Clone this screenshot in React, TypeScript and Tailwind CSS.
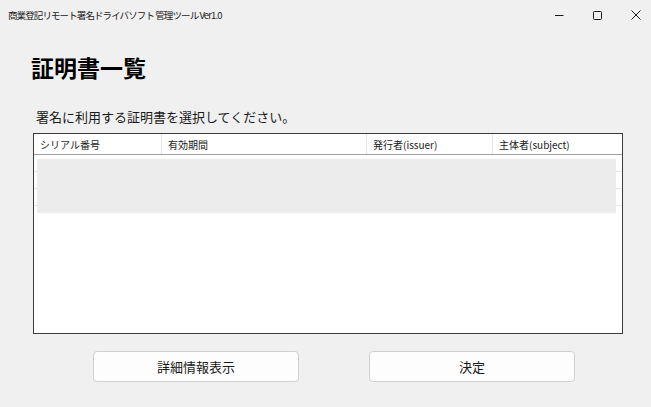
const FONT = { fontFamily: '"Noto Sans CJK JP", "Noto Sans", sans-serif' };

const COLUMNS = [
  { label: "シリアル番号", width: "w-[128px]" },
  { label: "有効期間", width: "w-[205px]" },
  { label: "発行者(issuer)", width: "w-[126px]" },
  { label: "主体者(subject)", width: "flex-1" },
];

function TitleBar() {
  return (
    <div className="flex h-[30px] items-center justify-between bg-[#f0f0f0] pl-[8px] pr-[10px]">
      <span className="text-[9.5px] tracking-[-0.9px] text-[#1a1a1a]">
        商業登記リモート署名ドライバソフト 管理ツール Ver1.0
      </span>
      <div className="flex items-center gap-[29px] text-[#1a1a1a]">
        <svg width="9" height="9" viewBox="0 0 9 9">
          <path d="M0 4.5h8.5" stroke="currentColor" strokeWidth="1" />
        </svg>
        <svg width="9" height="9" viewBox="0 0 9 9">
          <rect x="0.5" y="0.5" width="8" height="8" rx="1" fill="none" stroke="currentColor" strokeWidth="1" />
        </svg>
        <svg width="10" height="10" viewBox="0 0 10 10">
          <path d="M0.5 0.5l9 9M9.5 0.5l-9 9" stroke="currentColor" strokeWidth="1" />
        </svg>
      </div>
    </div>
  );
}

function CertTable() {
  return (
    <div className="ml-[33px] flex h-[201px] w-[590px] flex-col border border-[#3c3c3c] bg-white">
      <div className="flex h-[21px] border-b border-[#a0a0a0] text-[10px] text-[#1a1a1a]">
        {COLUMNS.map((c, i) => (
          <div
            key={c.label}
            className={`${c.width} flex items-center px-[6px] ${i < COLUMNS.length - 1 ? "border-r border-[#e5e5e5]" : ""}`}
          >
            {c.label}
          </div>
        ))}
      </div>
      <div className="relative flex-1">
        {[0, 1, 2].map((r) => (
          <div key={r} className="h-[17px] border-b border-[#e8e8e8]" />
        ))}
        {/* masked rows */}
        <div className="absolute left-[3px] top-[4px] h-[54px] w-[579px] bg-[#ececec]" />
      </div>
    </div>
  );
}

export default function App() {
  return (
    <div className="h-[407px] w-[651px] overflow-hidden bg-[#f0f0f0]" style={FONT}>
      <TitleBar />
      <h1 className="ml-[31px] mt-[21px] text-[23px] font-bold leading-[32px] text-black">証明書一覧</h1>
      <p className="ml-[36px] mt-[24px] text-[13px] leading-[20px] text-[#1a1a1a]">
        署名に利用する証明書を選択してください。
      </p>
      <div className="mt-[6px]">
        <CertTable />
      </div>
      <div className="mt-[17px] flex gap-[70px] pl-[93px]">
        <button className="h-[31px] w-[206px] rounded-[4px] border border-[#d0d0d0] bg-[#fdfdfd] text-[13px] text-[#1a1a1a]">
          詳細情報表示
        </button>
        <button className="h-[31px] w-[206px] rounded-[4px] border border-[#d0d0d0] bg-[#fdfdfd] text-[13px] text-[#1a1a1a]">
          決定
        </button>
      </div>
    </div>
  );
}
